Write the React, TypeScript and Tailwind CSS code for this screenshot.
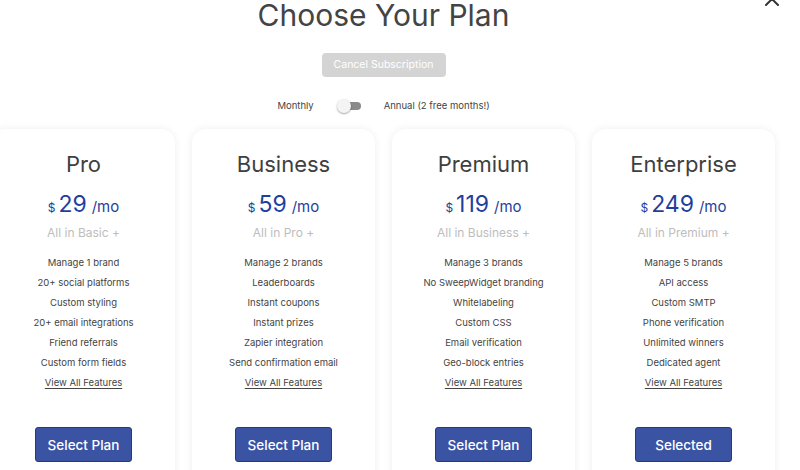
import { useState } from "react";

type Plan = {
  name: string;
  price: number;
  base: string;
  features: string[];
  selected?: boolean;
};

const plans: Plan[] = [
  {
    name: "Pro",
    price: 29,
    base: "All in Basic +",
    features: [
      "Manage 1 brand",
      "20+ social platforms",
      "Custom styling",
      "20+ email integrations",
      "Friend referrals",
      "Custom form fields",
    ],
  },
  {
    name: "Business",
    price: 59,
    base: "All in Pro +",
    features: [
      "Manage 2 brands",
      "Leaderboards",
      "Instant coupons",
      "Instant prizes",
      "Zapier integration",
      "Send confirmation email",
    ],
  },
  {
    name: "Premium",
    price: 119,
    base: "All in Business +",
    features: [
      "Manage 3 brands",
      "No SweepWidget branding",
      "Whitelabeling",
      "Custom CSS",
      "Email verification",
      "Geo-block entries",
    ],
  },
  {
    name: "Enterprise",
    price: 249,
    base: "All in Premium +",
    features: [
      "Manage 5 brands",
      "API access",
      "Custom SMTP",
      "Phone verification",
      "Unlimited winners",
      "Dedicated agent",
    ],
    selected: true,
  },
];

function PlanCard({ plan }: { plan: Plan }) {
  return (
    <div className="flex h-[380px] w-[183px] shrink-0 flex-col items-center rounded-[14px] bg-white pt-[21px] shadow-[0_0_8px_rgba(0,0,0,0.07)]">
      <h2 className="text-[22px] leading-[28px] text-[#3f3f3f]">{plan.name}</h2>
      <div className="mt-[11px] flex h-[30px] items-baseline text-[#1f3f9c]">
        <span className="mr-[3px] text-[12px]">$</span>
        <span className="text-[23px] leading-[30px]">{plan.price}</span>
        <span className="ml-[5px] text-[15px]">/mo</span>
      </div>
      <p className="mt-[5px] text-[12px] leading-[18px] text-[#bdbdbd]">{plan.base}</p>
      <ul className="mt-[11px] flex flex-col items-center">
        {plan.features.map((f) => (
          <li key={f} className="text-[9.5px] leading-[20px] text-[#444]">
            {f}
          </li>
        ))}
        <li className="text-[9.5px] leading-[20px] text-[#444] underline underline-offset-2">
          View All Features
        </li>
      </ul>
      <button
        type="button"
        className="mt-[34px] h-[35px] w-[97px] rounded-[3px] border border-[#23398a] bg-[#3a53a3] text-[13.5px] font-medium text-white"
      >
        {plan.selected ? "Selected" : "Select Plan"}
      </button>
    </div>
  );
}

export default function App() {
  const [annual, setAnnual] = useState(false);

  return (
    <div className="relative h-[470px] w-[800px] overflow-hidden bg-white font-['Inter','Noto_Sans',sans-serif]">
      <button type="button" className="absolute right-[20px] top-[-9px] text-[#333]">
        <svg width="16" height="16" viewBox="0 0 16 16" fill="none" stroke="currentColor" strokeWidth="2" strokeLinecap="round">
          <path d="M2 2l12 12M14 2L2 14" />
        </svg>
      </button>
      <div className="ml-[-8px] flex w-[783px] flex-col items-center">
        <h1 className="text-[30px] leading-[30px] text-[#444]">Choose Your Plan</h1>
        <button
          type="button"
          className="mt-[23px] h-[24px] w-[124px] rounded-[4px] bg-[#d4d4d4] text-[10.5px] text-white"
        >
          Cancel Subscription
        </button>
        <div className="mt-[22px] flex items-center text-[9.5px] text-[#444]">
          <span>Monthly</span>
          <button
            type="button"
            onClick={() => setAnnual(!annual)}
            className="relative mx-[23px] h-[14px] w-[24px]"
          >
            <span className="absolute left-[4px] right-0 top-[3px] h-[8px] rounded-full bg-[#8a8a8a]" />
            <span
              className={
                annual
                  ? "absolute left-[11px] top-0 h-[14px] w-[14px] rounded-full bg-white shadow-[0_1px_2px_rgba(0,0,0,0.35)]"
                  : "absolute left-0 top-0 h-[14px] w-[14px] rounded-full bg-[#f4f4f4] shadow-[0_1px_2px_rgba(0,0,0,0.35)]"
              }
            />
          </button>
          <span>Annual (2 free months!)</span>
        </div>
        <div className="mt-[16px] flex gap-[17px]">
          {plans.map((p) => (
            <PlanCard key={p.name} plan={p} />
          ))}
        </div>
      </div>
    </div>
  );
}
